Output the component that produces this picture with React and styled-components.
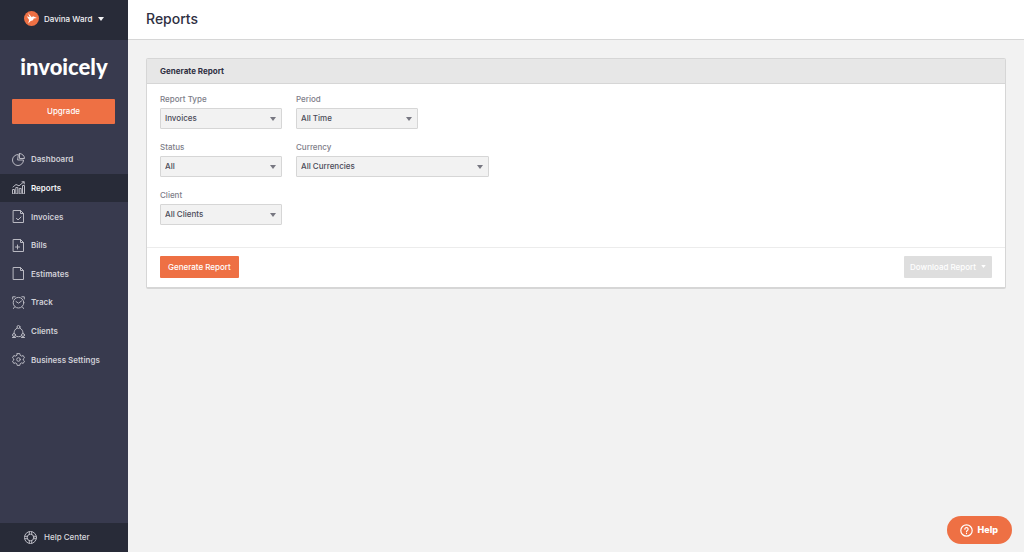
import React from "react";
import styled, { createGlobalStyle, css } from "styled-components";

const colors = {
  side: "#383a4e",
  sideDark: "#282b38",
  accent: "#ee7044",
  page: "#f2f2f2",
  border: "#d6d6d6",
  ink: "#2f3042",
};

const GlobalStyle = createGlobalStyle`
  *, *::before, *::after { box-sizing: border-box; }
  body {
    margin: 0;
    background: ${colors.page};
    color: ${colors.ink};
    font-family: Inter, "Liberation Sans", sans-serif;
    font-size: 8px;
    font-weight: 500;
    line-height: 12px;
  }
  button, select { font: inherit; }
`;

const Shell = styled.div`
  display: flex;
  min-height: 100vh;
`;

const Sidebar = styled.aside`
  display: flex;
  flex-direction: column;
  flex: 0 0 128px;
  background: ${colors.side};
`;

const AccountButton = styled.button`
  display: flex;
  align-items: center;
  height: 40px;
  padding: 0 0 3px 24px;
  border: 0;
  background: ${colors.sideDark};
  color: #f2f2f4;
`;

const Avatar = styled.svg`
  width: 15px;
  height: 15px;
  margin-right: 5px;
`;

const Caret = styled.svg`
  width: 6px;
  height: 4px;
  fill: currentColor;
`;

const AccountCaret = styled(Caret)`
  margin-left: 6px;
`;

const Logo = styled.a`
  padding-top: 14px;
  color: #fff;
  font-family: Lato, sans-serif;
  font-size: 22px;
  font-weight: 900;
  line-height: 26px;
  text-align: center;
  text-decoration: none;
`;

const UpgradeButton = styled.button`
  height: 25px;
  margin: 19px 13px 0 12px;
  padding: 0 0 2px;
  border: 0;
  border-radius: 1px;
  background: ${colors.accent};
  color: #fff;
`;

const Nav = styled.nav`
  display: grid;
  grid-template-rows: repeat(8, 1fr);
  height: 229px;
  margin-top: 21px;
`;

const NavLink = styled.a`
  display: flex;
  align-items: center;
  gap: 6px;
  padding-left: 12px;
  color: #d0d0d7;
  font-weight: 600;
  text-decoration: none;
  ${({ $active }) =>
    $active &&
    css`
      background: ${colors.sideDark};
      color: #f4f4f6;
    `}
`;

const LineIcon = styled.svg`
  width: 13px;
  height: 13px;
  flex: none;
  fill: none;
  stroke: #b9b9c2;
  stroke-width: 1;
  stroke-linejoin: round;
  stroke-linecap: round;
`;

const HelpCenter = styled.a`
  display: flex;
  align-items: center;
  gap: 7px;
  height: 29px;
  margin-top: auto;
  padding: 0 0 1px 24px;
  background: ${colors.sideDark};
  color: #d9d9de;
  text-decoration: none;
`;

const Main = styled.main`
  flex: 1;
  min-width: 0;
`;

const PageHeader = styled.header`
  height: 40px;
  padding: 9px 18px 0;
  border-bottom: 1px solid ${colors.border};
  background: #fff;
`;

const PageTitle = styled.h1`
  margin: 0;
  font-size: 14px;
  font-weight: 500;
  line-height: 20px;
`;

const Panel = styled.form`
  margin: 18px 18px 0;
  border: 1px solid ${colors.border};
  border-bottom-width: 2px;
  border-radius: 2px;
  background: #fff;
`;

const PanelTitle = styled.h2`
  margin: 0;
  padding: 6px 13px;
  border-bottom: 1px solid ${colors.border};
  background: #e7e7e7;
  font-size: 8px;
  font-weight: 700;
  line-height: 12px;
`;

const Fields = styled.div`
  display: grid;
  grid-template-columns: 122px 193px;
  gap: 12px 14px;
  padding: 9px 13px 22px;
`;

const Field = styled.div`
  display: flex;
  flex-direction: column;
  gap: 3px;
  grid-column: ${({ $column }) => $column};
`;

const FieldLabel = styled.label`
  color: #7d7d88;
`;

const SelectBox = styled.div`
  position: relative;
  width: ${({ $wide }) => ($wide ? "193px" : "122px")};
  color: #777781;
`;

const Select = styled.select`
  appearance: none;
  display: block;
  width: 100%;
  height: 21px;
  padding: 0 16px 1px 4px;
  border: 1px solid ${colors.border};
  border-radius: 1px;
  background: ${colors.page};
  color: #4a4a58;
`;

const SelectCaret = styled(Caret)`
  position: absolute;
  top: 9px;
  right: 6px;
  pointer-events: none;
`;

const PanelFooter = styled.footer`
  display: flex;
  justify-content: space-between;
  padding: 8px 13px 9px;
  border-top: 1px solid #ececec;
`;

const ActionButton = styled.button`
  display: flex;
  align-items: center;
  gap: 5px;
  height: 22px;
  padding: 0 ${({ $menu }) => ($menu ? "6px" : "8px")} 1px;
  border: 0;
  border-radius: 1px;
  background: ${({ disabled }) => (disabled ? "#dedede" : colors.accent)};
  color: #fff;
`;

const MenuCaret = styled(Caret)`
  width: 5px;
  height: 3px;
`;

const HelpButton = styled.button`
  position: fixed;
  right: 12px;
  bottom: 8px;
  display: flex;
  align-items: center;
  gap: 5px;
  height: 28px;
  padding: 0 14px 0 13px;
  border: 0;
  border-radius: 14px;
  background: ${colors.accent};
  color: #fff;
  font-size: 9px;
  font-weight: 800;
`;

const HelpIcon = styled.svg`
  width: 13px;
  height: 13px;
  fill: none;
  stroke: #fff;
  stroke-width: 1.2;
  stroke-linecap: round;
`;

const caretShape = <path d="M0 0h6L3 4z" />;

const sheet = <path d="M1.500 .5H8.500l3 3v9h-10zM8.500 .5v3h3" />;

const icons = {
  dashboard: (
    <>
      <path d="M6 1.500a5.500 5.500 0 1 0 5.500 5.500H6z" />
      <path d="M7.500 .5v5h5a5 5 0 0 0-5-5z" />
    </>
  ),
  reports: (
    <>
      <path d="M.5 12.500v-4h2v4zM3.800 12.500v-6h2v6zM7.200 12.500v-5h2v5zM10.500 12.500v-8h2v8z" />
      <path d="M1 6l3-2.500 3 1.300 5-4M10 .8h2.200V3" />
    </>
  ),
  invoices: (
    <>
      {sheet}
      <path d="M4.500 8.300l1.500 1.700 3-3" />
    </>
  ),
  bills: (
    <>
      {sheet}
      <path d="M5.500 6v4M3.500 8h4" />
    </>
  ),
  estimates: sheet,
  track: (
    <>
      <circle cx="6.500" cy="6.700" r="5.300" />
      <path d="M4 5.500l2.500 1.700L9.500 5M.7 3V.8h2.500M12.300 3V.8H9.800M2.500 11l-1 1.500M10.500 11l1 1.500" />
    </>
  ),
  clients: (
    <>
      <circle cx="6.500" cy="2" r="1.500" />
      <circle cx="2" cy="10" r="1.500" />
      <circle cx="11" cy="10" r="1.500" />
      <path d="M5 3.200C3 4 2 6 2 8.200M8 3.200c2 .8 3 2.800 3 5M3.700 11c1.600 1 4 1 5.600 0M.5 12.500h3M9.500 12.500h3" />
    </>
  ),
  settings: (
    <>
      <path d="M5.200 .6h2.600l.4 1.700 1.300.8 1.700-.5 1.300 2.200L11.200 6v1l1.300 1.200-1.300 2.200-1.700-.5-1.300.8-.4 1.700H5.200l-.4-1.700-1.300-.8-1.700.5L.5 8.200 1.800 7V6L.5 4.800l1.300-2.200 1.700.5 1.300-.8z" />
      <circle cx="6.500" cy="6.500" r="1.800" />
    </>
  ),
};

const navItems = [
  ["Dashboard", "dashboard"],
  ["Reports", "reports"],
  ["Invoices", "invoices"],
  ["Bills", "bills"],
  ["Estimates", "estimates"],
  ["Track", "track"],
  ["Clients", "clients"],
  ["Business Settings", "settings"],
];

const fields = [
  { id: "type", label: "Report Type", value: "Invoices", column: 1 },
  { id: "period", label: "Period", value: "All Time", column: 2 },
  { id: "status", label: "Status", value: "All", column: 1 },
  { id: "currency", label: "Currency", value: "All Currencies", column: 2, wide: true },
  { id: "client", label: "Client", value: "All Clients", column: 1 },
];

function SelectField({ id, label, value, column, wide }) {
  return (
    <Field $column={column}>
      <FieldLabel htmlFor={id}>{label}</FieldLabel>
      <SelectBox $wide={wide}>
        <Select id={id} defaultValue={value}>
          <option>{value}</option>
        </Select>
        <SelectCaret viewBox="0 0 6 4" aria-hidden="true">{caretShape}</SelectCaret>
      </SelectBox>
    </Field>
  );
}

export default function App() {
  return (
    <>
      <GlobalStyle />
      <Shell>
        <Sidebar>
          <AccountButton type="button">
            <Avatar viewBox="0 0 15 15" aria-hidden="true">
              <circle cx="7.500" cy="7.500" r="7.500" fill={colors.accent} />
              <path d="M4 2l3.800 4.200 1.200-.9 4 1.700-3.300.4-.7 1.800-2.300.7-2.500 2.600 1-3.500L2.800 5.300l3 1z" fill="#fff" />
            </Avatar>
            Davina Ward
            <AccountCaret viewBox="0 0 6 4" aria-hidden="true">{caretShape}</AccountCaret>
          </AccountButton>
          <Logo href="#">invoicely</Logo>
          <UpgradeButton type="button">Upgrade</UpgradeButton>
          <Nav>
            {navItems.map(([label, icon]) => (
              <NavLink key={icon} href="#" $active={icon === "reports"}>
                <LineIcon viewBox="0 0 13 13" aria-hidden="true">{icons[icon]}</LineIcon>
                {label}
              </NavLink>
            ))}
          </Nav>
          <HelpCenter href="#">
            <LineIcon viewBox="0 0 13 13" aria-hidden="true">
              <circle cx="6.500" cy="6.500" r="6" />
              <circle cx="6.500" cy="6.500" r="3.300" />
              <path d="M5.300 .8v2.500M7.700 .8v2.500M5.300 9.700v2.500M7.700 9.700v2.500M.8 5.300h2.500M.8 7.700h2.500M9.700 5.300h2.500M9.700 7.700h2.500" />
            </LineIcon>
            Help Center
          </HelpCenter>
        </Sidebar>
        <Main>
          <PageHeader>
            <PageTitle>Reports</PageTitle>
          </PageHeader>
          <Panel>
            <PanelTitle>Generate Report</PanelTitle>
            <Fields>
              {fields.map((field) => (
                <SelectField key={field.id} {...field} />
              ))}
            </Fields>
            <PanelFooter>
              <ActionButton type="button">Generate Report</ActionButton>
              <ActionButton type="button" disabled $menu>
                Download Report
                <MenuCaret viewBox="0 0 6 4" aria-hidden="true">{caretShape}</MenuCaret>
              </ActionButton>
            </PanelFooter>
          </Panel>
        </Main>
      </Shell>
      <HelpButton type="button">
        <HelpIcon viewBox="0 0 13 13" aria-hidden="true">
          <circle cx="6.500" cy="6.500" r="5.700" />
          <path d="M4.900 5.200a1.600 1.600 0 1 1 2.400 1.400c-.6.300-.8.600-.8 1.100M6.500 9.400v.2" />
        </HelpIcon>
        Help
      </HelpButton>
    </>
  );
}
